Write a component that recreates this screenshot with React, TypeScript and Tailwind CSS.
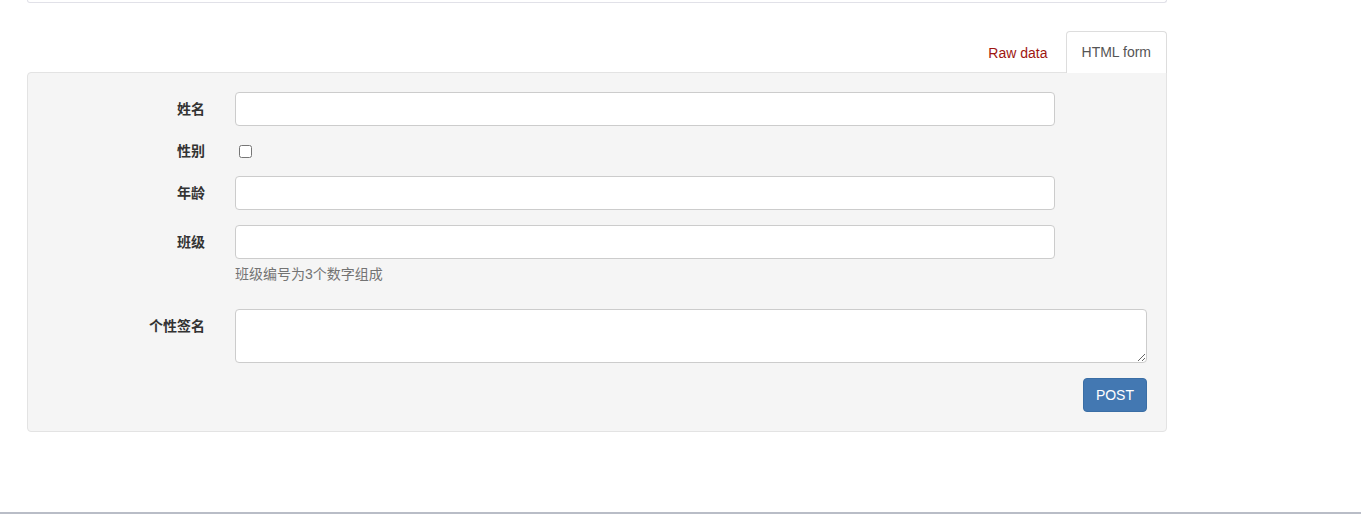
import React from 'react';

const font = { fontFamily: '"Liberation Sans", "Noto Sans CJK SC", sans-serif' };

function Label({ children, tight }: { children: React.ReactNode; tight?: boolean }) {
  return (
    <label className={`w-[158px] shrink-0 text-right font-bold text-[#333] text-[14px] leading-[20px] ${tight ? '' : 'pt-[7px]'}`}>
      {children}
    </label>
  );
}

export default function App() {
  return (
    <div style={font} className="h-[514px] w-full bg-white flex flex-col overflow-hidden text-[14px] text-[#333]">
      <div className="ml-[27px] w-[1140px]">
        {/* bottom of the response box above */}
        <div className="h-[3px] border-x border-b border-[#e1e1e8] rounded-b-[4px] bg-white" />

        {/* tabs */}
        <div className="mt-[28px] -mb-[1px] flex justify-end items-end gap-[2px]">
          <a className="mr-[1px] px-[15px] py-[10px] leading-[20px] text-[#9e1610] cursor-pointer">Raw data</a>
          <a className="relative z-10 px-[15px] pt-[10px] pb-[11px] leading-[20px] border border-b-0 border-[#ddd] rounded-t-[4px] bg-white text-[#555] cursor-pointer">
            HTML form
          </a>
        </div>

        {/* form well */}
        <form className="bg-[#f5f5f5] border border-[#e3e3e3] rounded-[4px] rounded-tr-none p-[19px] flex flex-col">
          <div className="flex items-start">
            <Label>姓名</Label>
            <input type="text" className="ml-[30px] w-[820px] h-[34px] px-[12px] bg-white border border-[#ccc] rounded-[4px] outline-none" />
          </div>

          <div className="flex items-start mt-[15px] h-[20px]">
            <Label tight>性别</Label>
            <input type="checkbox" className="ml-[34px] mt-[4px] w-[13px] h-[13px] m-0" />
          </div>

          <div className="flex items-start mt-[15px]">
            <Label>年龄</Label>
            <input type="text" className="ml-[30px] w-[820px] h-[34px] px-[12px] bg-white border border-[#ccc] rounded-[4px] outline-none" />
          </div>

          <div className="flex items-start mt-[15px]">
            <Label>班级</Label>
            <div className="ml-[30px] flex flex-col">
              <input type="text" className="w-[820px] h-[34px] px-[12px] bg-white border border-[#ccc] rounded-[4px] outline-none" />
              <span className="mt-[5px] mb-[10px] leading-[20px] text-[#737373]">班级编号为3个数字组成</span>
            </div>
          </div>

          <div className="flex items-start mt-[15px]">
            <Label>个性签名</Label>
            <textarea className="ml-[30px] w-[912px] h-[54px] px-[12px] py-[6px] bg-white border border-[#ccc] rounded-[4px] outline-none" />
          </div>

          <div className="flex justify-end mt-[15px]">
            <button type="button" className="h-[34px] px-[12px] leading-[20px] text-white bg-[#4378b2] border border-[#3a6ea5] rounded-[4px]">
              POST
            </button>
          </div>
        </form>
      </div>

      <div className="mt-auto h-[2px] w-full bg-[#b9bdc7]" />
    </div>
  );
}
